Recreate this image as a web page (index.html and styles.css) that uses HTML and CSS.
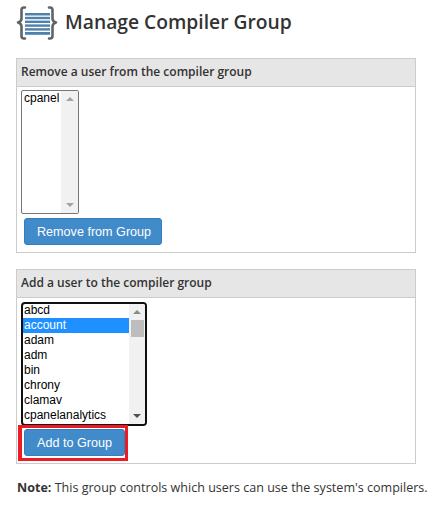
FILE: index.html
```html
<!DOCTYPE html>
<html lang="en">
<head>
<meta charset="utf-8">
<title>Manage Compiler Group</title>
<link rel="stylesheet" href="styles.css">
</head>
<body>
<h1 class="title">
  <svg class="title-icon" width="42" height="36" viewBox="0 0 42 36" aria-hidden="true">
    <g fill="none" stroke="#5f6467" stroke-width="2.600" stroke-linecap="round" stroke-linejoin="round">
      <path d="M9 2.500H8Q5.500 2.500 5.500 5V13.500Q5.500 16.500 2 17.500Q5.500 18.500 5.500 21.500V31Q5.500 33.500 8 33.500H9"/>
      <path d="M33 2.500H34Q36.500 2.500 36.500 5V13.500Q36.500 16.500 40 17.500Q36.500 18.500 36.500 21.500V31Q36.500 33.500 34 33.500H33"/>
    </g>
    <g fill="#4f81ad">
      <rect x="9" y="8" width="25" height="2.500"/>
      <rect x="9" y="11.800" width="25" height="2.400"/>
      <rect x="9" y="15.600" width="25" height="2.400"/>
      <rect x="9" y="19.400" width="25" height="2.400"/>
      <rect x="9" y="23.200" width="25" height="2.400"/>
      <rect x="9" y="27" width="25" height="2.800"/>
    </g>
  </svg>
  <span class="title-text">Manage Compiler Group</span>
</h1>

<section class="panel panel-remove">
  <h2 class="panel-head">Remove a user from the compiler group</h2>
  <div class="panel-body">
    <div class="listbox listbox-small">
      <ul class="options">
        <li>cpanel</li>
      </ul>
      <div class="scroll">
        <span class="arrow arrow-up"></span>
        <span class="arrow arrow-down"></span>
      </div>
    </div>
    <div class="actions">
      <button class="btn btn-remove" type="button">Remove from Group</button>
    </div>
  </div>
</section>

<section class="panel panel-add">
  <h2 class="panel-head">Add a user to the compiler group</h2>
  <div class="panel-body panel-body-add">
    <div class="listbox listbox-focus">
      <ul class="options">
        <li>abcd</li>
        <li class="selected">account</li>
        <li>adam</li>
        <li>adm</li>
        <li>bin</li>
        <li>chrony</li>
        <li>clamav</li>
        <li>cpanelanalytics</li>
      </ul>
      <div class="scroll">
        <span class="arrow arrow-up arrow-dark"></span>
        <span class="thumb"></span>
        <span class="arrow arrow-down arrow-dark"></span>
      </div>
    </div>
    <div class="actions actions-marked">
      <button class="btn" type="button">Add to Group</button>
    </div>
  </div>
</section>

<p class="note"><strong>Note:</strong> This group controls which users can use the system's compilers.</p>
</body>
</html>
```
FILE: styles.css
```css
* {
  box-sizing: border-box;
}

html,
body {
  margin: 0;
  padding: 0;
  background: #fff;
}

body {
  width: 431px;
  height: 515px;
  overflow: hidden;
  padding: 5px 15px 0 16px;
  font-family: "Open Sans", sans-serif;
  color: #333;
}

.title {
  display: flex;
  align-items: center;
  gap: 7px;
  height: 36px;
  margin: 0 0 17px;
  font-size: 19.250px;
  font-weight: 600;
  color: #333;
}

.title-icon {
  flex: none;
}

.title-text {
  padding-bottom: 4px;
}

.panel {
  border: 1px solid #ccc;
}

.panel-remove {
  height: 195px;
  margin-bottom: 16px;
}

.panel-add {
  height: 195px;
  margin-bottom: 15px;
}

.panel-head {
  height: 28px;
  margin: 0;
  padding: 0 4px;
  font-size: 12px;
  line-height: 26px;
  font-weight: 600;
  background: #e6e6e6;
  border-bottom: 1px solid #ccc;
  color: #333;
}

.panel-body {
  padding: 3px 4px 0;
  font-family: "Liberation Sans", Arial, sans-serif;
}

.panel-body-add {
  padding-top: 4px;
}

.listbox {
  display: flex;
  height: 124px;
  border: 1px solid #767676;
  border-radius: 2px;
  background: #fff;
  overflow: hidden;
}

.listbox-small {
  width: 58px;
}

.listbox-focus {
  width: 126px;
  border: 2px solid #101010;
  border-radius: 4px;
}

.options {
  flex: 1;
  min-width: 0;
  margin: 0;
  padding: 0;
  list-style: none;
  font-size: 12px;
  line-height: 15px;
  color: #000;
  overflow: hidden;
}

.options li {
  padding: 0 1px;
  white-space: nowrap;
  height: 15px;
}

.listbox-small .options li {
  padding: 0 2px;
}

.listbox-focus .options {
  margin-top: -1px;
}

.options .selected {
  background: #1e90ff;
  color: #fff;
}

.scroll {
  flex: none;
  width: 17px;
  display: flex;
  flex-direction: column;
  align-items: center;
  padding: 6px 0;
  background: #f1f1f1;
}

.listbox-focus .scroll {
  width: 16px;
}

.thumb {
  width: 13px;
  height: 17px;
  margin-top: 6px;
  background: #bdbdbd;
}

.arrow {
  display: block;
  width: 0;
  height: 0;
  border-left: 4px solid transparent;
  border-right: 4px solid transparent;
}

.arrow-up {
  border-bottom: 4px solid #a3a3a3;
}

.arrow-down {
  margin-top: auto;
  border-top: 4px solid #a3a3a3;
}

.arrow-dark.arrow-up {
  border-bottom-color: #8a8a8a;
}

.arrow-dark.arrow-down {
  border-top-color: #505050;
}

.actions {
  display: inline-flex;
  margin: 4px 0 0 3px;
}

.actions-marked {
  margin: -1px 0 0 -3px;
  padding: 1px 0 2px 2px;
  border: 3px solid #ed1c24;
  border-left-width: 4px;
}

.btn {
  height: 27px;
  padding: 0 12px;
  font-family: "Liberation Sans", Arial, sans-serif;
  font-size: 12.600px;
  white-space: nowrap;
  color: #fff;
  background: #428bca;
  border: 1px solid #357ebd;
  border-radius: 3px;
}

.btn-remove {
  width: 138px;
  padding-right: 0;
  text-align: left;
}

.note {
  margin: 0;
  padding-left: 1px;
  font-size: 12.550px;
  line-height: 18px;
  white-space: nowrap;
  color: #333;
}

.note strong {
  font-weight: 700;
}
```
